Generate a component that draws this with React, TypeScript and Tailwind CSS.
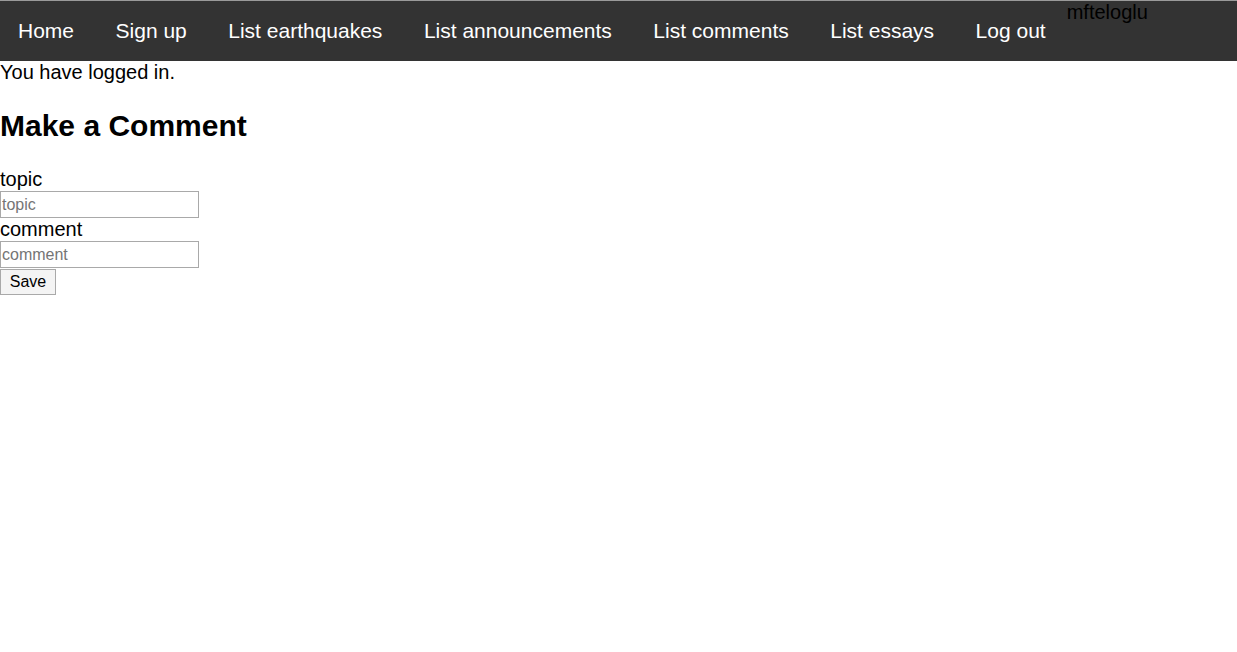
import React from 'react';

const links = ['Home', 'Sign up', 'List earthquakes', 'List announcements', 'List comments', 'List essays', 'Log out'];

export default function App() {
  return (
    <div className="min-h-screen bg-white text-black text-[20px] leading-[23px]" style={{ fontFamily: '"Liberation Sans", Arial, sans-serif' }}>
      <nav className="flex items-start h-[61px] bg-[#333333] border-t border-[#9a9a9a]">
        <ul className="flex gap-[5.5px]">
          {links.map((l) => (
            <li key={l}>
              <a href="#" className="block px-[18px] py-[18px] text-[21px] leading-[24px] text-white">
                {l}
              </a>
            </li>
          ))}
        </ul>
        <span className="ml-[3px] text-black text-[20px] leading-[23px]">mfteloglu</span>
      </nav>
      <p>You have logged in.</p>
      <h2 className="text-[30px] leading-[34px] font-bold my-[25px]">Make a Comment</h2>
      <form className="flex flex-col items-start">
        <label htmlFor="topic">topic</label>
        <input
          id="topic"
          placeholder="topic"
          className="w-[199px] h-[27px] border border-[#a9a9a9] px-[1px] text-[16px] placeholder:text-[#757575] outline-none"
        />
        <label htmlFor="comment">comment</label>
        <input
          id="comment"
          placeholder="comment"
          className="w-[199px] h-[27px] border border-[#a9a9a9] px-[1px] text-[16px] placeholder:text-[#757575] outline-none"
        />
        <button type="button" className="mt-[1px] h-[26px] w-[56px] border border-[#a9a9a9] bg-[#f4f4f4] text-[16px] leading-[18px]">
          Save
        </button>
      </form>
    </div>
  );
}
